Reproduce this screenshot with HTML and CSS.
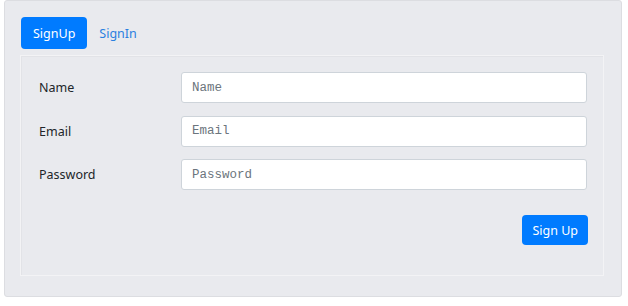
FILE: index.html
```html
<!DOCTYPE html>
<html lang="en">
<head>
  <meta charset="UTF-8">
  <meta name="viewport" content="width=device-width, initial-scale=1.0">
  <title>Account</title>
  <link rel="stylesheet" href="styles.css">
</head>
<body>
  <div class="card">
    <div class="tabs">
      <a class="tab active" href="#">SignUp</a>
      <a class="tab" href="#">SignIn</a>
    </div>

    <div class="panel">
      <form class="form">
        <div class="row">
          <label for="name">Name</label>
          <input type="text" id="name" placeholder="Name">
        </div>
        <div class="row">
          <label for="email">Email</label>
          <input type="email" id="email" placeholder="Email">
        </div>
        <div class="row">
          <label for="password">Password</label>
          <input type="password" id="password" placeholder="Password">
        </div>
        <div class="actions">
          <button type="submit">Sign Up</button>
        </div>
      </form>
    </div>
  </div>
</body>
</html>
```

FILE: styles.css
```css
body {
  margin: 0;
  padding: 0 6px 0 4px;
  background-color: #ffffff;
  font-family: 'Noto Sans', 'Open Sans', sans-serif;
  font-size: 12.5px;
  color: #212529;
}
.card {
  background-color: #e9eaee;
  border: 1px solid #dcdde1;
  border-radius: 3px;
  padding: 16px 17px 20px 15px;
}
.tabs {
  display: flex;
  margin-left: 1px;
  margin-bottom: 6px;
}
.tab {
  display: block;
  height: 32px;
  line-height: 33px;
  padding: 0 12px;
  border-radius: 4px;
  color: #2b7fe0;
  text-decoration: none;
}
.tab.active {
  background-color: #007bff;
  color: white;
}
.panel {
  border: 1px solid #f3f3f5;
  box-shadow: inset 1px 1px 0 #e2e3e7;
  padding: 16px 16px 30px 17px;
}
.row {
  display: grid;
  grid-template-columns: 143px 1fr;
  align-items: center;
  margin-bottom: 12.5px;
}
label {
  color: #212529;
  padding-left: 1px;
}
input {
  height: 31px;
  box-sizing: border-box;
  border: 1px solid #ced4da;
  border-radius: 3px;
  background-color: white;
  padding: 0 10px;
  font-family: 'Liberation Mono', monospace;
  font-size: 12.5px;
  outline: none;
}
input::placeholder {
  color: #6c757d;
}
.actions {
  display: flex;
  justify-content: flex-end;
  padding-top: 12.5px;
}
button {
  height: 30px;
  padding: 0 10px;
  margin-right: -1px;
  border: none;
  border-radius: 4px;
  background-color: #007bff;
  color: white;
  font-family: 'Noto Sans', 'Open Sans', sans-serif;
  font-size: 12.5px;
  cursor: pointer;
}
```
